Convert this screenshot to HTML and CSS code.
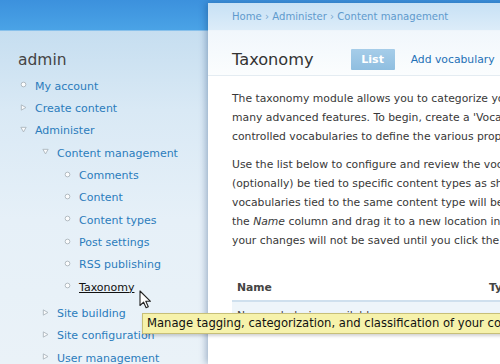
FILE: index.html
```html
<!DOCTYPE html>
<html lang="en">
<head>
<meta charset="utf-8">
<title>Taxonomy</title>
<link rel="stylesheet" href="styles.css">
</head>
<body>
<div class="page">
  <aside class="sidebar">
    <div class="topbar"></div>
    <h2 class="block-title">admin</h2>
    <ul class="menu level1">
      <li class="item leaf"><svg class="ico" viewBox="0 0 8 8"><circle cx="4" cy="4" r="2.7"/></svg><a href="#">My account</a></li>
      <li class="item collapsed"><svg class="ico" viewBox="0 0 8 8"><path d="M1.5 1 L6.8 4 L1.5 7 Z"/></svg><a href="#">Create content</a></li>
      <li class="group">
        <div class="item expanded"><svg class="ico" viewBox="0 0 8 8"><path d="M1 1.5 L7 1.5 L4 6.8 Z"/></svg><a href="#">Administer</a></div>
        <ul class="menu nested">
          <li class="group">
            <div class="item expanded"><svg class="ico" viewBox="0 0 8 8"><path d="M1 1.5 L7 1.5 L4 6.8 Z"/></svg><a href="#">Content management</a></div>
            <ul class="menu nested deep">
              <li class="item leaf"><svg class="ico" viewBox="0 0 8 8"><circle cx="4" cy="4" r="2.7"/></svg><a href="#">Comments</a></li>
              <li class="item leaf"><svg class="ico" viewBox="0 0 8 8"><circle cx="4" cy="4" r="2.7"/></svg><a href="#">Content</a></li>
              <li class="item leaf"><svg class="ico" viewBox="0 0 8 8"><circle cx="4" cy="4" r="2.7"/></svg><a href="#">Content types</a></li>
              <li class="item leaf"><svg class="ico" viewBox="0 0 8 8"><circle cx="4" cy="4" r="2.7"/></svg><a href="#">Post settings</a></li>
              <li class="item leaf"><svg class="ico" viewBox="0 0 8 8"><circle cx="4" cy="4" r="2.7"/></svg><a href="#">RSS publishing</a></li>
              <li class="item leaf"><svg class="ico" viewBox="0 0 8 8"><circle cx="4" cy="4" r="2.7"/></svg><a href="#" class="hover">Taxonomy</a></li>
            </ul>
          </li>
          <li class="item collapsed"><svg class="ico" viewBox="0 0 8 8"><path d="M1.5 1 L6.8 4 L1.5 7 Z"/></svg><a href="#">Site building</a></li>
          <li class="item collapsed"><svg class="ico" viewBox="0 0 8 8"><path d="M1.5 1 L6.8 4 L1.5 7 Z"/></svg><a href="#">Site configuration</a></li>
          <li class="item collapsed"><svg class="ico" viewBox="0 0 8 8"><path d="M1.5 1 L6.8 4 L1.5 7 Z"/></svg><a href="#">User management</a></li>
        </ul>
      </li>
    </ul>
  </aside>

  <main class="panel">
    <div class="crumbs"><a href="#">Home</a> › <a href="#">Administer</a> › <a href="#">Content management</a></div>
    <div class="titlebar">
      <h1 class="title">Taxonomy</h1>
      <ul class="tabs">
        <li class="tab active">List</li>
        <li class="tab"><a href="#">Add vocabulary</a></li>
      </ul>
    </div>
    <div class="content">
      <p>The taxonomy module allows you to categorize your content using both tags and administrator defined terms. It is a flexible tool for classifying content with<br>many advanced features. To begin, create a 'Vocabulary' to hold one set of terms or tags. You can create one free-tagging vocabulary for everything, or separate<br>controlled vocabularies to define the various properties of your content, for example 'Countries' or 'Colors'.</p>
      <p>Use the list below to configure and review the vocabularies defined on your site, or to change the ordering of vocabularies in select boxes. Vocabularies may<br>(optionally) be tied to specific content types as shown in the <em>Type</em> column and, if so, will be displayed when creating or editing posts of that type. Multiple<br>vocabularies tied to the same content type will be displayed in the order shown below. To change the order of a vocabulary, grab a drag-and-drop handle under<br>the <em>Name</em> column and drag it to a new location in the list. (Grab a handle by clicking and holding the mouse while hovering over a handle icon.) Remember that<br>your changes will not be saved until you click the <em>Save</em> button at the bottom of the page.</p>
      <table class="vocab">
        <thead>
          <tr><th class="col-name">Name</th><th>Type</th><th>Operations</th></tr>
        </thead>
        <tbody>
          <tr><td colspan="3">No vocabularies available.</td></tr>
        </tbody>
      </table>
    </div>
  </main>

  <div class="tooltip">Manage tagging, categorization, and classification of your content.</div>
  <svg class="cursor" viewBox="0 0 13 19" width="13" height="19"><path d="M1 1 L1 15.5 L4.6 12.2 L7.1 17.8 L9.3 16.8 L6.8 11.3 L11.5 11.3 Z"/></svg>
</div>
</body>
</html>
```

FILE: styles.css
```css
html, body {
  margin: 0;
  padding: 0;
}
body {
  width: 500px;
  height: 364px;
  overflow: hidden;
  font-family: "DejaVu Sans", Verdana, sans-serif;
  font-size: 11px;
  color: #333;
  background: #e8f1f8;
}
a {
  text-decoration: none;
}
.page {
  position: relative;
  display: flex;
  width: 500px;
  height: 364px;
  overflow: hidden;
  background: linear-gradient(to bottom, #3c91dd 0, #4aa2e5 30px, #e8f1f8 30px);
}

/* sidebar */
.sidebar {
  flex: 0 0 208px;
  background: linear-gradient(to bottom, #3c91dd 0, #4aa3e6 30px, #c6def0 31px, #d9e9f5 110px, #e6f0f8 220px, #eaf2f8 364px);
}
.topbar {
  height: 31px;
}
.block-title {
  margin: 19px 0 5px 18px;
  font-size: 15.5px;
  line-height: 20px;
  font-weight: normal;
  color: #444;
}
.menu {
  list-style: none;
  margin: 0;
  padding: 0 0 0 20px;
}
.menu.nested {
  padding-left: 22px;
}
.menu.deep {
  margin-bottom: 4px;
}
.item {
  display: flex;
  align-items: center;
  height: 22.35px;
}
.item a {
  color: #2b7cbc;
  font-size: 11px;
  white-space: nowrap;
}
.item a.hover {
  color: #111;
  text-decoration: underline;
}
.ico {
  flex: 0 0 7px;
  width: 7px;
  height: 7px;
  margin-right: 8px;
  margin-top: -3px;
  fill: #fbfcfd;
  stroke: #aab3ba;
  stroke-width: 1;
}

/* main panel */
.panel {
  flex: 0 0 330px;
  margin-top: 3px;
  background: #fff;
  box-shadow: -2px 0 7px rgba(0, 45, 100, 0.32);
  display: flex;
  flex-direction: column;
}
.crumbs {
  height: 27px;
  line-height: 27px;
  padding-left: 24px;
  font-size: 10.1px;
  color: #7aa8d0;
  background: linear-gradient(to bottom, #c7e1f5, #dcecf9);
  border-bottom: 1px solid #eef5fb;
  white-space: nowrap;
}
.crumbs a {
  color: #5f9acd;
}
.titlebar {
  display: flex;
  align-items: center;
  height: 32px;
  padding: 12px 0 0 24px;
  background: linear-gradient(to bottom, #f1f7fc, #fbfdfe);
  border-bottom: 1px solid #e4ecf2;
}
.title {
  margin: 0 37px 0 0;
  font-size: 16.2px;
  font-weight: normal;
  color: #333;
  white-space: nowrap;
}
.tabs {
  display: flex;
  align-items: center;
  gap: 16px;
  list-style: none;
  margin: 0;
  padding: 0;
  white-space: nowrap;
}
.tab a {
  color: #1e70b6;
  font-size: 10.8px;
}
.tab.active {
  width: 44px;
  height: 21px;
  line-height: 21px;
  text-align: center;
  color: #fff;
  font-weight: bold;
  font-size: 11px;
  background: linear-gradient(to bottom, #a6cde9, #8fbee0);
  border-radius: 1px;
}
.content {
  padding: 13px 0 0 24px;
}
.content p {
  margin: 0 0 9px;
  font-size: 10.8px;
  line-height: 19px;
  white-space: nowrap;
  color: #383838;
}
.vocab {
  margin-top: 25px;
  border-collapse: collapse;
  white-space: nowrap;
  font-size: 10.8px;
}
.vocab th {
  text-align: left;
  color: #444;
  padding: 0 5px;
  height: 25px;
  border-bottom: 2px solid #cfe0ee;
}
.vocab th.col-name {
  width: 242px;
}
.vocab td {
  padding: 6px 5px;
  line-height: 16px;
  background: #eef5fa;
  color: #444;
}

/* tooltip + pointer */
.tooltip {
  position: absolute;
  left: 142px;
  top: 313px;
  height: 19px;
  line-height: 19px;
  padding: 0 4px;
  background: #f6f2ab;
  border: 1px solid #c7bf78;
  box-shadow: 1px 2px 3px rgba(0, 0, 0, 0.18);
  color: #111;
  font-size: 11.6px;
  white-space: nowrap;
}
.cursor {
  position: absolute;
  left: 139px;
  top: 290px;
  fill: #fff;
  stroke: #222;
  stroke-width: 1.1;
  stroke-linejoin: round;
}
```
